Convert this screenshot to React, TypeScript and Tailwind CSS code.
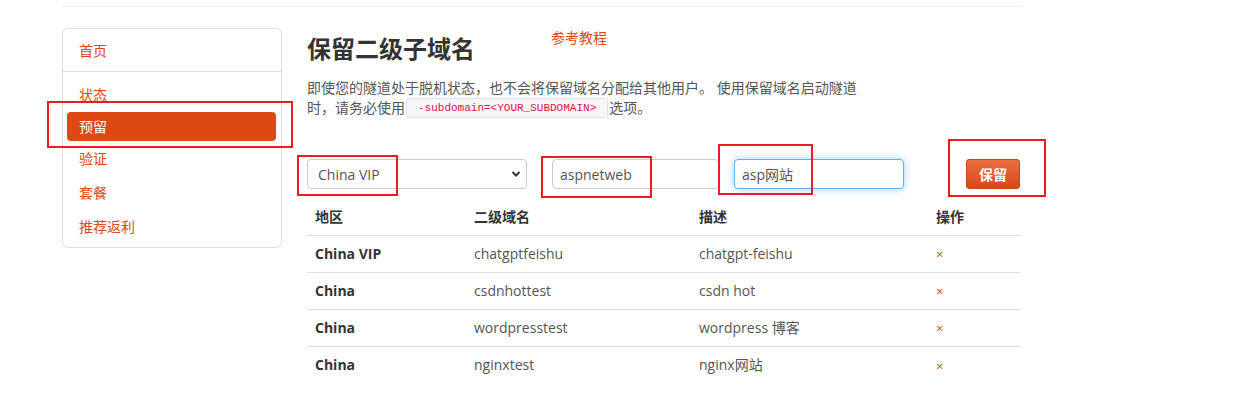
import React from "react";

const FONT = { fontFamily: '"Open Sans", "Noto Sans CJK SC", sans-serif' };

const navItems = ["状态", "预留", "验证", "套餐", "推荐返利"];

const rows = [
  { region: "China VIP", sub: "chatgptfeishu", desc: "chatgpt-feishu" },
  { region: "China", sub: "csdnhottest", desc: "csdn hot" },
  { region: "China", sub: "wordpresstest", desc: "wordpress 博客" },
  { region: "China", sub: "nginxtest", desc: "nginx网站" },
];

// red callout frames drawn on top of the page
const callouts = [
  "left-[47px] top-[101px] w-[246px] h-[47px]",
  "left-[297px] top-[155px] w-[101px] h-[41px]",
  "left-[541px] top-[156px] w-[111px] h-[42px]",
  "left-[718px] top-[144px] w-[95px] h-[51px]",
  "left-[948px] top-[139px] w-[98px] h-[58px]",
];

function Sidebar() {
  return (
    <div className="w-[220px] h-[220px] shrink-0 rounded-[6px] border border-[#ddd] bg-white">
      <div className="h-[43px] flex items-center pl-[16px] text-[14px] text-[#dd4814] border-b border-[#ddd]">
        首页
      </div>
      <div className="pt-[5px]">
        {navItems.map((item) =>
          item === "预留" ? (
            <div
              key={item}
              className="h-[29px] mt-[1px] ml-[4px] mr-[5px] rounded-[4px] bg-[#dd4814] flex items-center pl-[12px] text-[14px] text-white"
            >
              {item}
            </div>
          ) : (
            <div
              key={item}
              className="h-[34px] flex items-center pl-[16px] text-[14px] text-[#dd4814]"
            >
              {item}
            </div>
          )
        )}
      </div>
    </div>
  );
}

function Main() {
  return (
    <div className="ml-[25px] w-[713px]">
      <div className="flex items-start">
        <h1 className="mt-[8px] text-[24px] leading-[26px] font-bold text-[#333]">
          保留二级子域名
        </h1>
        <a className="ml-[76px] text-[14px] leading-[20px] text-[#dd4814]">参考教程</a>
      </div>

      <p className="mt-[16px] text-[14px] leading-[20px] text-[#555]">
        即使您的隧道处于脱机状态，也不会将保留域名分配给其他用户。 使用保留域名启动隧道
        <br />
        时，请务必使用
        <code
          className="mx-[1px] inline-block h-[20px] px-[11px] align-top rounded-[3px] border border-[#e1e1e8] bg-[#f7f7f9] text-[11px] leading-[18px] text-[#dd1144]"
          style={{ fontFamily: '"Liberation Mono", monospace' }}
        >
          {"-subdomain=<YOUR_SUBDOMAIN>"}
        </code>
        选项。
      </p>

      <div className="mt-[41px] flex items-center h-[30px]">
        <div className="relative w-[220px] h-[30px]">
          <select
            defaultValue="China VIP"
            className="appearance-none w-full h-full rounded-[4px] border border-[#ccc] bg-white pl-[10px] text-[14px] text-[#555] outline-none"
            style={FONT}
          >
            <option>China VIP</option>
            <option>China</option>
          </select>
          <svg
            className="absolute right-[6px] top-[11px] pointer-events-none"
            width="10"
            height="8"
            viewBox="0 0 10 8"
          >
            <path d="M1.5 2 L5 5.5 L8.5 2" fill="none" stroke="#333" strokeWidth="2" />
          </svg>
        </div>
        <input
          defaultValue="aspnetweb"
          className="ml-[25px] w-[167px] h-[30px] rounded-[4px] border border-[#ccc] bg-white px-[7px] text-[14px] text-[#555] outline-none"
          style={FONT}
        />
        <input
          defaultValue="asp网站"
          className="ml-[15px] w-[170px] h-[30px] rounded-[4px] border border-[#66afe9] bg-white px-[7px] text-[14px] text-[#555] outline-none shadow-[0_0_8px_rgba(102,175,233,0.6)]"
          style={FONT}
        />
        <button
          className="ml-[62px] w-[54px] h-[30px] rounded-[3px] border border-[#c94417] bg-linear-to-b from-[#eb6f42] to-[#d9461a] text-[14px] font-bold text-white"
          style={FONT}
        >
          保留
        </button>
      </div>

      <table className="mt-[10px] w-[713px] border-collapse text-[14px] text-left">
        <colgroup>
          <col className="w-[159px]" />
          <col className="w-[225px]" />
          <col className="w-[237px]" />
          <col className="w-[92px]" />
        </colgroup>
        <thead>
          <tr className="border-b border-[#ddd]">
            {["地区", "二级域名", "描述", "操作"].map((h) => (
              <th key={h} className="h-[36px] px-[8px] font-bold text-[#333]">
                {h}
              </th>
            ))}
          </tr>
        </thead>
        <tbody>
          {rows.map((r, i) => (
            <tr key={i} className={i > 0 ? "border-t border-[#ddd]" : ""}>
              <td className="h-[37px] px-[8px] font-bold text-[#333]">{r.region}</td>
              <td className="h-[37px] px-[8px] text-[#555]">{r.sub}</td>
              <td className="h-[37px] px-[8px] text-[#555]">{r.desc}</td>
              <td className="h-[37px] px-[8px] pt-[3px] text-[13px] text-[#dd4814]">×</td>
            </tr>
          ))}
        </tbody>
      </table>
    </div>
  );
}

export default function App() {
  return (
    <div className="relative w-[1260px] h-[412px] bg-white overflow-hidden" style={FONT}>
      <div className="ml-[62px] w-[960px]">
        <div className="mt-[6px] h-px bg-[#eee]" />
        <div className="mt-[21px] flex items-start">
          <Sidebar />
          <Main />
        </div>
      </div>
      {callouts.map((c) => (
        <div key={c} className={`absolute border-2 border-[#ec1c24] pointer-events-none ${c}`} />
      ))}
    </div>
  );
}
